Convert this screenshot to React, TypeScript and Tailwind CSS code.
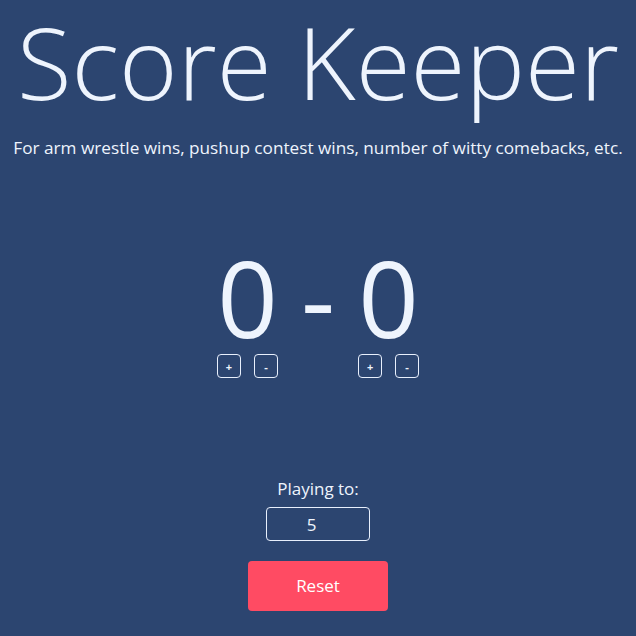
import { useState } from 'react'

function ScoreButtons({ onPlus, onMinus }: { onPlus: () => void; onMinus: () => void }) {
    return (
        <div className="flex gap-[13px]">
            <button onClick={onPlus} className="w-6 h-6 flex items-center justify-center rounded-[4px] border border-[#e8effc] text-[11px] font-bold leading-none">+</button>
            <button onClick={onMinus} className="w-6 h-6 flex items-center justify-center rounded-[4px] border border-[#e8effc] text-[11px] font-bold leading-none">-</button>
        </div>
    )
}

export default function App() {
    const [p1, setP1] = useState(0)
    const [p2, setP2] = useState(0)
    const [target, setTarget] = useState('5')

    const reset = () => {
        setP1(0)
        setP2(0)
    }

    return (
        <main className="w-full min-h-screen bg-[#2c4570] text-[#eef4fd] flex flex-col items-center font-['Open_Sans',sans-serif]">
            <h1 className="mt-[1px] text-[100px] leading-[1.2] font-light whitespace-nowrap">Score Keeper</h1>
            <p className="mt-[15px] text-[17.2px] leading-[23px] whitespace-nowrap">For arm wrestle wins, pushup contest wins, number of witty comebacks, etc.</p>

            <div className="mt-[85px] flex items-start">
                <div className="w-[61px] flex flex-col items-center">
                    <span className="text-[106px] leading-none">{p1}</span>
                    <div className="mt-[4px]">
                        <ScoreButtons onPlus={() => setP1(p1 + 1)} onMinus={() => setP1(Math.max(0, p1 - 1))} />
                    </div>
                </div>
                <span className="mx-[23px] text-[106px] leading-none">-</span>
                <div className="w-[61px] flex flex-col items-center">
                    <span className="text-[106px] leading-none">{p2}</span>
                    <div className="mt-[4px]">
                        <ScoreButtons onPlus={() => setP2(p2 + 1)} onMinus={() => setP2(Math.max(0, p2 - 1))} />
                    </div>
                </div>
            </div>

            <p className="mt-[99px] text-[17px] leading-[23px]">Playing to:</p>
            <input
                value={target}
                onChange={e => setTarget(e.target.value)}
                className="mt-[7px] w-[104px] h-[34px] pr-[13px] rounded-[4px] border border-[#e8effc] bg-transparent text-center text-[17px] outline-none"
            />
            <button onClick={reset} className="mt-[20px] w-[140px] h-[50px] rounded-[4px] bg-[#ff4b63] text-white text-[17px]">Reset</button>
        </main>
    )
}
